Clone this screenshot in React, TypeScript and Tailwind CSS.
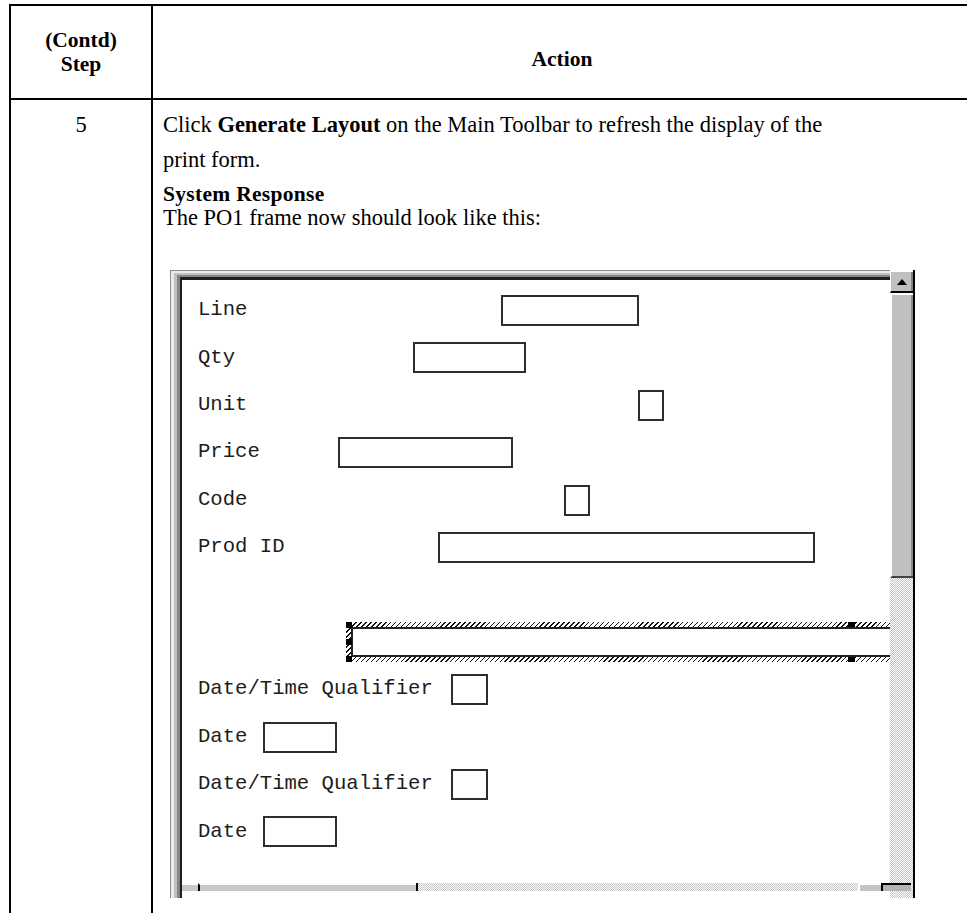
import React from "react";

/* -------------------- Form canvas data -------------------- */

type Field = {
  label: string;
  left: number; // box x inside canvas
  width: number;
};

// one entry per 47.4px row; null = empty row, "hatch" = selected field
const rows: (Field | null | "hatch")[] = [
  { label: "Line", left: 319, width: 138 },
  { label: "Qty", left: 231, width: 113 },
  { label: "Unit", left: 456, width: 26 },
  { label: "Price", left: 156, width: 175 },
  { label: "Code", left: 382, width: 26 },
  { label: "Prod ID", left: 256, width: 377 },
  null,
  "hatch",
  { label: "Date/Time Qualifier", left: 269, width: 37 },
  { label: "Date", left: 81, width: 74 },
  { label: "Date/Time Qualifier", left: 269, width: 37 },
  { label: "Date", left: 81, width: 74 },
];

const hatch =
  "bg-[repeating-linear-gradient(135deg,#111_0px,#111_1px,#fff_1px,#fff_3.5px)]";

const SelectedField: React.FC = () => (
  <div className={`absolute left-[164px] top-[3.7px] h-[40px] w-[760px] ${hatch} py-[5px] pl-[5px]`}>
    <div className="h-full border-y-2 border-l-2 border-[#222] bg-white" />
    {/* grab handles */}
    <div className="absolute left-0 top-0 h-[6px] w-[6px] bg-black" />
    <div className="absolute left-0 top-[17px] h-[6px] w-[6px] bg-black" />
    <div className="absolute bottom-0 left-0 h-[6px] w-[6px] bg-black" />
    <div className="absolute left-[502px] top-0 h-[5px] w-[7px] bg-black" />
    <div className="absolute bottom-0 left-[502px] h-[5px] w-[7px] bg-black" />
  </div>
);

const FormRow: React.FC<{ row: Field | null | "hatch" }> = ({ row }) => (
  <div className="relative flex h-[47.4px] items-center pl-[16px]">
    {row === "hatch" ? (
      <SelectedField />
    ) : row ? (
      <>
        <span className="whitespace-pre">{row.label}</span>
        <div
          className="absolute top-[8px] h-[31px] border-2 border-[#2e2e2e]"
          style={{ left: row.left, width: row.width }}
        />
      </>
    ) : null}
  </div>
);

/* -------------------- Scrollbars -------------------- */

const dither =
  "bg-[repeating-conic-gradient(#c4c4c4_0_25%,#fff_0_50%)] bg-[length:2px_2px]";

const VScroll: React.FC = () => (
  <div className="flex w-[25px] flex-col border-r-2 border-black">
    <div className="flex h-[23px] items-center justify-center border-l border-t-2 border-white border-b-2 border-b-black bg-[#c0c0c0] shadow-[inset_-2px_0_0_#808080]">
      <svg width="10" height="6" viewBox="0 0 10 6">
        <path d="M5 0 L10 6 L0 6 Z" fill="#000" />
      </svg>
    </div>
    <div className="h-[285px] border-l-2 border-t-2 border-white border-b-2 border-b-[#404040] bg-[#c0c0c0] shadow-[inset_-2px_0_0_#888]" />
    <div className={`flex-1 ${dither}`} />
  </div>
);

const HScroll: React.FC = () => (
  <div className="absolute bottom-[7px] left-[12px] right-[4px] flex h-[8px]">
    <div className="w-[16px] border-t-2 border-white bg-[#c8c8c8]" />
    <div className="w-[218px] border-l-2 border-t-2 border-l-black border-t-white bg-[#c8c8c8]" />
    <div className={`w-[442px] border-l-2 border-black ${dither}`} />
    <div className="w-[23px] border-l-2 border-t-2 border-white bg-[#c4c4c4]" />
    <div className="flex-1 border-l-2 border-t-2 border-black bg-[#b4b4b4]" />
  </div>
);

/* -------------------- Screenshot frame -------------------- */

const PrintFormFrame: React.FC = () => (
  <div className="relative ml-[7px] mt-[40px] flex h-[628px] w-[745px]">
    <div className="flex-1 border-l border-t border-[#8c8c8c]">
      <div className="h-full border-l-[3px] border-t-2 border-[#ebebeb]">
        <div className="h-full border-l-[3px] border-t-2 border-[#c0c0c0]">
          <div className="h-full border-l-[3px] border-t-2 border-[#858585]">
            <div className="h-full overflow-hidden border-l-2 border-t-[3px] border-[#1e1e1e] bg-white pt-[7px] font-['Liberation_Mono','Courier_New',monospace] text-[20.6px] text-[#1c1c1c]">
              {rows.map((r, i) => (
                <FormRow key={i} row={r} />
              ))}
            </div>
          </div>
        </div>
      </div>
    </div>
    <VScroll />
    <HScroll />
  </div>
);

/* -------------------- Page -------------------- */

export default function App() {
  return (
    <div className="h-[913px] w-[967px] overflow-hidden bg-white font-['Liberation_Serif','Times_New_Roman',serif] text-black">
      <div className="ml-[9px] mt-[4px] w-[962px] border-l-2 border-t-2 border-black">
        {/* header */}
        <div className="flex h-[94px] border-b-2 border-black text-[21.5px] font-bold">
          <div className="flex w-[142px] flex-col items-center justify-center border-r-2 border-black leading-[24px]">
            <span>(Contd)</span>
            <span>Step</span>
          </div>
          <div className="flex flex-1 items-center justify-center pt-[14px]">Action</div>
        </div>

        {/* step 5 */}
        <div className="flex h-[900px]">
          <div className="w-[142px] border-r-2 border-black pt-[7px] text-center text-[22.5px] leading-[35px]">
            5
          </div>
          <div className="flex-1 pl-[10px] pt-[7px] text-[22.5px]">
            <p className="max-w-[690px] leading-[35px]">
              Click <b>Generate Layout</b> on the Main Toolbar to refresh the display of the
              print form.
            </p>
            <p className="mt-[5px] text-[21.5px] font-bold leading-[24px] tracking-[0.3px]">System Response</p>
            <p className="leading-[24px]">The PO1 frame now should look like this:</p>
            <PrintFormFrame />
          </div>
        </div>
      </div>
    </div>
  );
}
